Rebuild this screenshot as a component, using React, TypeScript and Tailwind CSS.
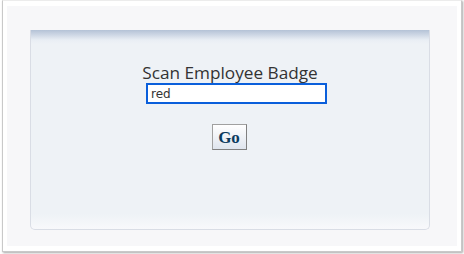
import React from "react";

export default function App() {
  return (
    <div className="w-[464px] h-[254px] bg-white overflow-hidden">
      <div className="ml-[2px] w-[460px] h-[252px] border border-[#c9c9c9] border-t-[#ececec] shadow-[1px_1px_2px_rgba(0,0,0,0.35)] bg-white pt-[5px] pl-[4px]">
        <div className="w-[450px] h-[240px] bg-[#f7f7f9] pt-[24px] pl-[23px]">
          <div className="w-[400px] h-[200px] border-x border-b border-[#d9dde5] rounded-b-[5px] bg-[linear-gradient(to_bottom,#b4c2d6_0px,#e9eef4_10px,#eef2f6_14px,#eef2f6_184px,#f8f9fb_199px)] flex flex-col items-center pt-[33px]">
            <div className="text-[17.2px] leading-[20px] text-[#333333] font-['Open_Sans',sans-serif]">
              Scan Employee Badge
            </div>
            <div className="ml-[13px] w-[181px] h-[21px] border-2 border-[#0a5fdb] bg-white flex items-center pl-[3px] text-[12px] text-[#333] font-['DejaVu_Sans',sans-serif]">
              red
            </div>
            <button className="mt-[20px] mr-[2px] w-[35px] h-[26px] border border-[#a0a0a0] border-b-[#808080] border-r-[#808080] bg-[linear-gradient(to_bottom,#ffffff,#dfe5ee)] text-[17px] font-bold text-[#0b3b5e] font-['Liberation_Serif',serif] leading-none">
              Go
            </button>
          </div>
        </div>
      </div>
    </div>
  );
}
